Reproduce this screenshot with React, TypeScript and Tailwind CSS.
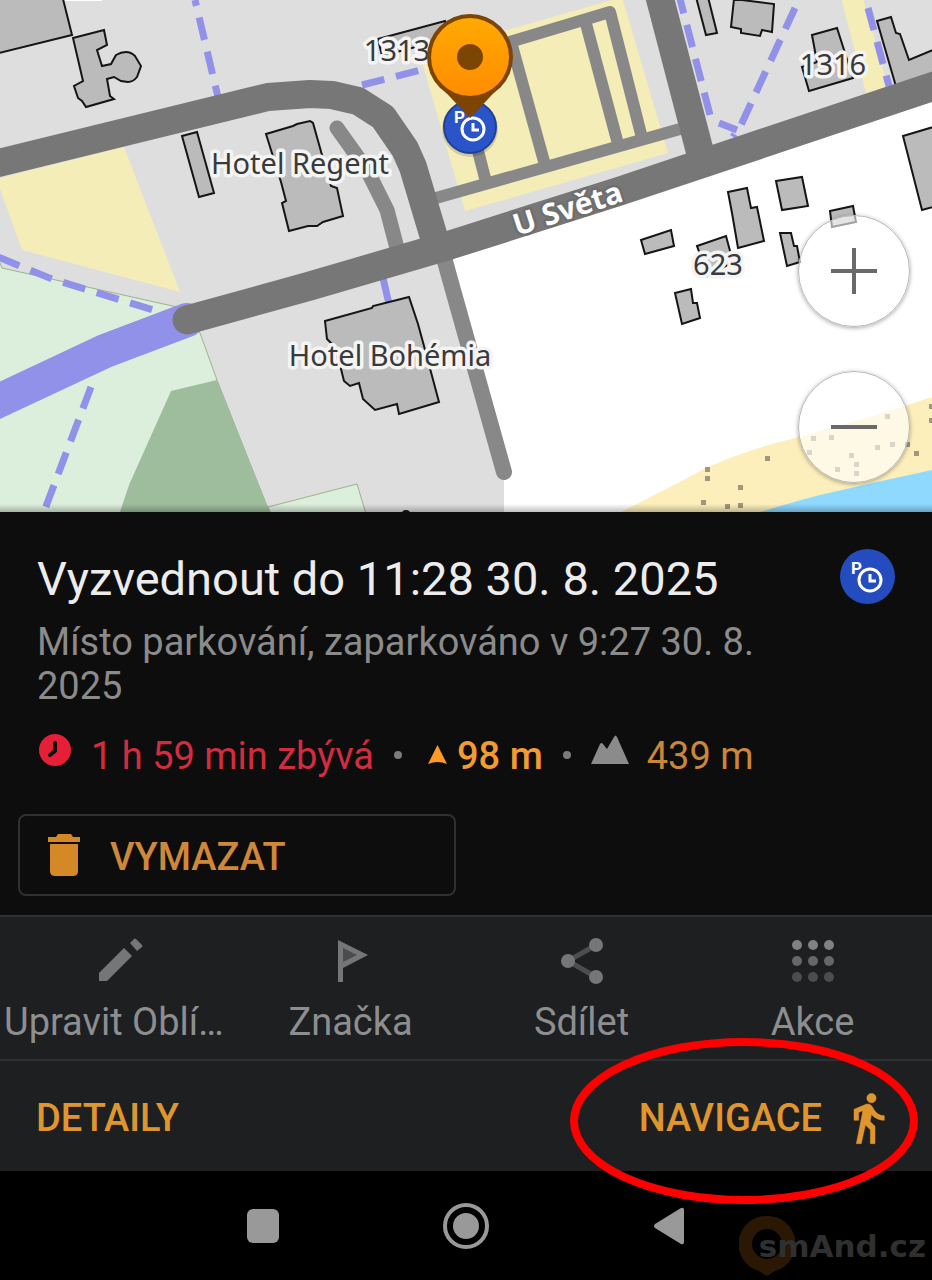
import type { ReactNode } from "react";

const buildings = [
  "-5,-5 62,-5 64,3 72,35 -5,54",
  "182,136 197,132 214,193 199,197",
  "266,134 293,126 297,124 310,121 313,123 322,155 331,186 337,188 343,216 323,222 317,226 308,226 289,231 282,203 286,201 281,182",
  "378,39 445,21 449,38 382,56",
  "696,-3 708,-3 717,33 706,35",
  "734,-1 774,4 772,32 762,30 760,36 741,33 741,29 731,27",
  "812,35 837,28 853,78 809,91 802,67 817,62",
  "877,21 891,17 896,33 900,34 909,60 940,47 940,90 897,90",
  "903,136 940,125 940,205 922,210",
  "776,181 802,177 808,206 782,210",
  "728,192 747,188 751,208 757,207 764,241 738,248 732,213",
  "830,211 853,206 856,222 832,227",
  "780,233 791,233 794,246 797,246 800,262 787,266",
  "641,240 671,230 674,246 645,254",
  "697,246 726,236 733,262 708,276",
  "675,293 691,289 693,303 697,303 700,318 682,324",
  "325,321 372,308 373,306 409,297 418,324 424,346 439,402 399,414 397,404 375,410 363,399 359,383 350,386 344,381 341,369 333,345 327,339",
];

const footpaths = [
  "M362 85L421 70",
  "M678 -9L710 115",
  "M719 123L737 130",
  "M795 8L741 125L733 137",
  "M868 8L889 86",
  "M-2 257L52 279L153 310",
  "M91 387L45 509",
];

const sandDots = [
  [767, 458], [707, 469], [707, 478], [740, 487], [703, 502], [727, 506], [740, 505], [916, 453],
  [931, 406], [931, 420], [887, 416], [813, 438], [831, 437], [809, 452], [851, 455], [877, 447],
  [892, 444], [907, 444], [837, 469], [856, 464], [856, 473],
];

const labels = [
  { text: "1313", x: 397, y: 61 },
  { text: "Hotel Regent", x: 300, y: 174 },
  { text: "Hotel Bohémia", x: 390, y: 366 },
  { text: "1316", x: 833, y: 75 },
  { text: "623", x: 718, y: 275 },
];

function ParkingMark() {
  return (
    <>
      <text x="11" y="25" fontSize="17" fontWeight="700" fill="#fff" className="font-['Roboto',sans-serif]">P</text>
      <circle cx="30" cy="31" r="11" fill="none" stroke="#fff" strokeWidth="3" />
      <path d="M30 25v7h6" fill="none" stroke="#fff" strokeWidth="3" />
    </>
  );
}

function MapView() {
  return (
    <svg viewBox="0 0 932 512" className="block h-auto w-full" role="img" aria-label="Mapa">
      <defs>
        <linearGradient id="pin" x1="0" y1="0" x2="0" y2="1">
          <stop offset="0" stopColor="#ffa902" />
          <stop offset="1" stopColor="#ff8c00" />
        </linearGradient>
        <linearGradient id="edge" x1="0" y1="0" x2="0" y2="1">
          <stop offset="0" stopColor="#000" stopOpacity="0" />
          <stop offset="1" stopColor="#000" stopOpacity="0.25" />
        </linearGradient>
      </defs>

      {/* land */}
      <rect width="932" height="512" fill="#dedede" />
      <rect width="102" height="1" fill="#fff" />
      <path d="M450 246L620 191L932 86V512H504V478Z" fill="#fff" />
      <path d="M0 178L124 147L180 292L22 250L0 189Z" fill="#f4edb8" />
      <path d="M420 55L622 -3L668 153L465 211Z" fill="#f4edb8" />
      <path d="M841 -2H863L888 87L867 97Z" fill="#f4edb8" />
      <path d="M-2 258L2 268L177 307L200 333L217 380L270 514H-2Z" fill="#dcefdc" stroke="#9cb38b" />
      <path d="M171 391L217 380L270 512H120L129 485Z" fill="#9ebd9d" />
      <path d="M268 507L357 484L366 514H271Z" fill="#dcefdc" stroke="#9cb38b" />
      <path d="M619 513Q665 490 706 468Q745 450 799 437Q870 418 932 397V512Z" fill="#fcefbb" />
      <path d="M760 512Q800 500 820 495L877 482L932 470V512Z" fill="#8fd8fe" />
      {sandDots.map(([x, y]) => (
        <rect key={`${x}-${y}`} x={x - 2} y={y - 2} width="5" height="5" fill="#a2967f" />
      ))}

      {/* paths */}
      <g fill="none" stroke="#9291e9" strokeWidth="7">
        <path d="M195 0L218 97" strokeDasharray="23 12" strokeDashoffset="17" />
        {footpaths.map((d) => (
          <path key={d} d={d} strokeDasharray="23 12" />
        ))}
        <path d="M383 278L389 304" />
        <path d="M-10 405L105 351L187 320" strokeWidth="34" strokeLinecap="round" />
      </g>

      <g fill="#bbb" stroke="#151515" strokeWidth="2">
        {buildings.map((points) => (
          <polygon key={points} points={points} />
        ))}
        <path d="M73 38L104 30L107 45L97 50L102 66L111 64L116 55Q121 52 126 52Q131 52 135 56L141 66L137 77Q133 82 128 82L121 81L114 77L107 79L110 96L114 99L86 107L82 101L78 98L74 86L83 81Z" />
        <circle cx="406" cy="515" r="4" />
      </g>

      {/* roads */}
      <g fill="none" stroke="#888" strokeWidth="12" strokeLinejoin="round">
        <path d="M436 198L680 129" />
        <path d="M470 120L486 182" />
        <path d="M500 45L610 12L642 138" />
        <path d="M511 42L545 165" />
        <path d="M585 20L618 144" />
        <path d="M337 128L367 170L387 210L398 252" strokeWidth="15" strokeLinecap="round" />
        <path d="M444 258L504 472" strokeWidth="16" strokeLinecap="round" />
      </g>
      <g fill="none" stroke="#777" strokeWidth="28" strokeLinejoin="round">
        <path d="M-10 165L268 97L310 94L332 95L358 101L383 117L405 149L413 167L436 244" />
        <path d="M659 -5L700 152" />
        <path d="M187 320L310 286L450 245L620 191L940 84" strokeWidth="29" strokeLinecap="round" />
      </g>

      {/* labels */}
      <g className="font-['Noto_Sans',sans-serif]" fontSize="29" strokeLinejoin="round" paintOrder="stroke">
        {labels.map((label) => (
          <text key={label.text} x={label.x} y={label.y} textAnchor="middle" fill="#3a3a3a" stroke="#f4f4f4" strokeWidth="7">
            {label.text}
          </text>
        ))}
        <text x="517" y="236" fontSize="30" fill="#fff" stroke="#6f6f6f" strokeWidth="5" fontWeight="700" transform="rotate(-18 517 236)">
          U Světa
        </text>
      </g>

      {/* parking marker under the pin */}
      <circle cx="470" cy="129" r="28" fill="#000" opacity="0.15" />
      <circle cx="470" cy="127" r="26" fill="#2a55c8" stroke="#213f97" strokeWidth="2" />
      <g transform="translate(443 98)">
        <ParkingMark />
      </g>
      <path d="M436 82Q452 99 466 114L470 118L474 114Q488 99 504 82Z" fill="#7d4503" />
      <circle cx="470" cy="57" r="43" fill="#7d4503" />
      <circle cx="470" cy="57" r="39" fill="url(#pin)" />
      <circle cx="470" cy="57" r="13" fill="#7d4503" />

      <rect y="504" width="932" height="8" fill="url(#edge)" />
    </svg>
  );
}

function ZoomButton({ label, path }: { label: string; path: string }) {
  return (
    <button
      aria-label={label}
      className="flex size-28 items-center justify-center rounded-full border border-[#b8b8b8] bg-white/60 shadow-[0_1px_4px_rgba(0,0,0,0.35)]"
    >
      <svg viewBox="0 0 46 46" className="size-[46px]" stroke="#6a6a6a" strokeWidth="4">
        <path d={path} />
      </svg>
    </button>
  );
}

function Tool({ label, align = "text-center", children }: { label: string; align?: string; children: ReactNode }) {
  return (
    <button className="flex min-w-0 flex-col items-center gap-3">
      <svg viewBox="0 0 56 56" className="size-14" fill="#757677">
        {children}
      </svg>
      <span className={`w-full truncate ${align}`}>{label}</span>
    </button>
  );
}

function Dot() {
  return <span className="mt-[17px] size-2 shrink-0 rounded-full bg-[#7b7b7b]" />;
}

export default function App() {
  return (
    <div className="min-h-screen bg-black font-['Roboto',sans-serif] text-[38px] leading-[44px]">
      <div className="relative">
        <MapView />
        <div className="absolute top-[215px] right-[22px] flex flex-col gap-11">
          <ZoomButton label="Přiblížit" path="M0 23H46M23 0V46" />
          <ZoomButton label="Oddálit" path="M0 23H46" />
        </div>
      </div>

      <main className="bg-[#0d0d0d] pt-[37px] pb-[19px]">
        <div className="flex items-start justify-between px-[37px]">
          <div className="max-w-[740px]">
            <h1 className="pt-0.5 text-[47px] leading-[56px] text-[#ececec]">Vyzvednout do 11:28 30. 8. 2025</h1>
            <p className="mt-[13px] text-[#8b8b8b]">Místo parkování, zaparkováno v 9:27 30. 8. 2025</p>
          </div>
          <svg viewBox="0 0 55 55" className="size-[55px] shrink-0">
            <circle cx="27.5" cy="27.5" r="27.5" fill="#244cbf" />
            <ParkingMark />
          </svg>
        </div>

        <div className="mt-[26px] flex items-start px-[37px]">
          <svg viewBox="0 0 36 44" className="h-11 w-9 shrink-0">
            <circle cx="18" cy="16" r="16" fill="#e61f38" />
            <path d="M18 9V17L13 21" fill="none" stroke="#0d0d0d" strokeWidth="4" strokeLinecap="round" strokeLinejoin="round" />
          </svg>
          <span className="mr-5 ml-[18px] text-[#d22c40]">1 h 59 min zbývá</span>
          <Dot />
          <svg viewBox="0 0 19 44" className="mr-2.5 ml-[26px] h-11 w-[19px] shrink-0" fill="#ff9b25">
            <path d="M9.5 11L19 30Q9.500 26 0 30Z" />
          </svg>
          <span className="mr-5 font-medium text-[#f39a31]">98 m</span>
          <Dot />
          <svg viewBox="0 0 38 44" className="mr-[18px] ml-5 h-11 w-[38px] shrink-0" fill="#8b8b8b">
            <path d="M0 30L9 10Q10.500 8 12 10L16 15L23 3Q24.500 0 26 3L38 30Z" />
          </svg>
          <span className="text-[#cb8638]">439 m</span>
        </div>

        <div className="mt-9 grid grid-cols-2 gap-5 px-[18px]">
          <button className="flex h-[82px] items-center gap-[29px] rounded-lg border-2 border-[#303030] pl-7 font-medium text-[#cf883a]">
            <svg viewBox="0 0 33 42" className="h-[42px] w-[33px]" fill="#d58826">
              <path d="M0 3H8L10 0H23L25 3H32V8H0ZM2 10H30V37Q30 42 25 42H7Q2 42 2 37Z" />
            </svg>
            <span className="pt-1">VYMAZAT</span>
          </button>
        </div>
      </main>

      <div className="grid grid-cols-4 border-t-2 border-[#303133] bg-[#1e1f21] px-1 py-[15px] text-[#8d8e8f]">
        <Tool label="Upravit Oblí…" align="text-left">
          <path d="M7 49V41L32 16L40 24L15 49Z" />
          <path d="M38 11L42 7Q43 6 44 7L50 13Q51 14 50 15L45 19Z" />
        </Tool>
        <Tool label="Značka">
          <path d="M15 8L45 23L20 36V50H15Z" />
          <path d="M20 16L34 23L20 30Z" fill="#4b4c4c" />
        </Tool>
        <Tool label="Sdílet">
          <path d="M42 13L14 29L42 45" fill="none" stroke="#4c4d4e" strokeWidth="5" />
          <circle cx="42" cy="13" r="7" />
          <circle cx="14" cy="29" r="7" />
          <circle cx="42" cy="45" r="7" />
        </Tool>
        <Tool label="Akce">
          {[["#808182", 13], ["#666768", 29], ["#4c4d4f", 45]].map(([fill, y]) =>
            [12, 28, 44].map((x) => <circle key={`${x}-${y}`} cx={x} cy={y} r="5" fill={String(fill)} />)
          )}
        </Tool>
      </div>

      <div className="relative flex h-28 items-center justify-between border-t-2 border-[#2e2f32] bg-[#1e1f21] pt-1 pr-9 pl-9 font-medium text-[#e0962f]">
        <button>DETAILY</button>
        <button className="flex items-center gap-[18px]">
          NAVIGACE
          <svg viewBox="0 0 24 24" className="size-14" fill="currentColor" stroke="currentColor" strokeWidth="0.2">
            <path d="M13.500 5.500c1.100 0 2-.9 2-2s-.9-2-2-2-2 .9-2 2 .9 2 2 2zM9.800 8.900L7 23h2.100l1.800-8 2.100 2v6h2v-7.500l-2.100-2 .6-3C14.800 12 16.800 13 19 13v-2c-1.900 0-3.500-1-4.300-2.400l-1-1.600c-.4-.6-1-1-1.700-1-.3 0-.5.1-.8.1L6 8.300V13h2V9.600l1.800-.7" />
          </svg>
        </button>
        <svg viewBox="0 0 348 166" className="pointer-events-none absolute -top-[23px] right-3.5 z-10 h-[166px] w-[348px]">
          <ellipse cx="174" cy="83" rx="170" ry="79" fill="none" stroke="#fe0000" strokeWidth="8" />
        </svg>
      </div>

      <nav className="relative flex h-[109px] items-center justify-center bg-black">
        <button aria-label="Poslední aplikace" className="flex w-[203px] justify-center">
          <span className="h-[34px] w-8 rounded-md bg-[#999]" />
        </button>
        <button aria-label="Domů" className="flex w-[203px] justify-center">
          <span className="flex size-[46px] items-center justify-center rounded-full border-4 border-[#999]">
            <span className="size-[26px] rounded-full bg-[#999]" />
          </span>
        </button>
        <button aria-label="Zpět" className="flex w-[203px] justify-center">
          <svg viewBox="0 0 30 38" className="h-[38px] w-[30px]" fill="#999">
            <path d="M1 17L27 1Q30 0 30 3V35Q30 38 27 37L1 21Q-1 19 1 17Z" />
          </svg>
        </button>
        <div className="pointer-events-none absolute right-1.5 bottom-0 flex items-center">
          <svg viewBox="0 0 56 64" className="-mr-9 h-16 w-14">
            <path d="M28 0A28 28 0 0 1 36 55L28 60L20 55A28 28 0 0 1 28 0ZM28 13A15 15 0 0 0 28 43A15 15 0 0 0 28 13Z" fill="#2a1804" fillRule="evenodd" />
          </svg>
          <span className="relative pb-1 font-['DejaVu_Sans',sans-serif] text-[31px] font-bold text-[#303030]">smAnd.cz</span>
        </div>
      </nav>
    </div>
  );
}
